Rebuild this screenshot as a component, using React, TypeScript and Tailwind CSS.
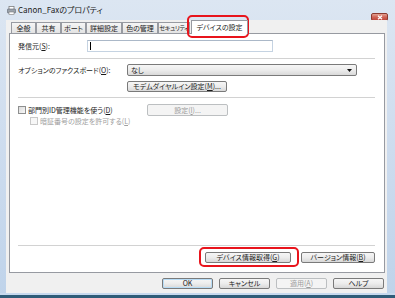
import { ReactNode } from "react";

const jp =
  "font-['Noto_Sans_CJK_JP','Noto_Sans',sans-serif] [font-feature-settings:'palt']";

function Key({ k }: { k: string }) {
  return (
    <>
      (<span className="underline underline-offset-1">{k}</span>)
    </>
  );
}

function WinButton({
  children,
  className = "",
  disabled = false,
  primary = false,
}: {
  children: ReactNode;
  className?: string;
  disabled?: boolean;
  primary?: boolean;
}) {
  return (
    <div
      className={[
        "flex h-[11px] items-center justify-center whitespace-nowrap rounded-[2px] border text-[7px] leading-none",
        disabled
          ? "border-[#bcbfc1] bg-[#f4f4f4] text-[#9c9c9c]"
          : "border-[#7a7a7a] bg-gradient-to-b from-[#f6f6f6] via-[#ececec] to-[#d8d8d8] text-[#1b1b1b]",
        primary ? "border-[#3d7bad] shadow-[inset_0_0_0_1px_#b7dcf6]" : "",
        className,
      ].join(" ")}
    >
      {children}
    </div>
  );
}

function CheckBox({ disabled = false }: { disabled?: boolean }) {
  return (
    <div
      className={[
        "h-[8px] w-[8px] border",
        disabled
          ? "border-[#c9c9c9] bg-[#f7f7f7]"
          : "border-[#8e8f8f] bg-gradient-to-br from-[#dcdcdc] to-[#f8f8f8]",
      ].join(" ")}
    />
  );
}

const tabs = [
  { label: "全般", width: "w-[25px] justify-center text-[7px]" },
  { label: "共有", width: "w-[25px] justify-center text-[7px]" },
  { label: "ポート", width: "w-[25px] justify-center text-[7px]" },
  { label: "詳細設定", width: "w-[36px] justify-center text-[7px]" },
  { label: "色の管理", width: "w-[36px] justify-center text-[7px]" },
  { label: "セキュリティ", width: "w-[32px] justify-center text-[6px] tracking-[-0.3px]" },
];

export default function App() {
  return (
    <div
      className={`${jp} relative flex h-[298px] w-[395px] flex-col overflow-hidden bg-gradient-to-b from-[#dce6f2] via-[#cddcee] to-[#bfd3ea] text-[#1b1b1b]`}
    >
      {/* title bar */}
      <div className="flex h-[20px] shrink-0 items-start">
        <svg
          className="ml-[7px] mt-[6px]"
          width="9"
          height="9"
          viewBox="0 0 9 9"
        >
          <rect x="2" y="0.5" width="5" height="3" fill="#fff" stroke="#7d7d7d" strokeWidth="0.8" />
          <rect x="0.5" y="3" width="8" height="4" rx="0.6" fill="#9aa2ab" stroke="#5f6670" strokeWidth="0.6" />
          <rect x="2" y="6" width="5" height="2.5" fill="#fff" stroke="#7d7d7d" strokeWidth="0.6" />
        </svg>
        <span className="ml-[2px] mt-[5px] text-[8px] leading-[10px] text-[#222]">
          Canon_Faxのプロパティ
        </span>
        <div className="ml-auto mr-[7px] mt-[13px] flex h-[8px] w-[17px] items-center justify-center rounded-[2px] border border-[#8b3a30] bg-gradient-to-b from-[#e3a193] via-[#cf6457] to-[#c0463b]">
          <svg width="6" height="5" viewBox="0 0 6 5">
            <path d="M1 0.7 L5 4.3 M5 0.7 L1 4.3" stroke="#fff" strokeWidth="1.2" />
          </svg>
        </div>
      </div>

      {/* dialog body */}
      <div className="ml-[6px] mr-[8px] flex flex-1 flex-col bg-[#f0f0f0] pl-[3px] pr-[2px]">
        {/* tab strip */}
        <div className="flex h-[13px] items-end pl-[2px]">
          {tabs.map((t) => (
            <div
              key={t.label}
              className={`${t.width} flex h-[11px] items-center overflow-hidden whitespace-nowrap border border-b-0 border-[#979aa1] bg-gradient-to-b from-[#f5f5f5] to-[#e3e3e3] leading-none`}
            >
              {t.label}
            </div>
          ))}
          <div className="relative z-10 -mb-px ml-[1px] flex h-[14px] w-[57px] items-center justify-center whitespace-nowrap border border-b-0 border-[#979aa1] bg-white text-[7px] leading-none">
            デバイスの設定
          </div>
        </div>

        {/* tab panel */}
        <div className="flex h-[240px] flex-col border border-[#979aa1] bg-white pb-[9px] pl-[8px] pr-[9px] pt-[6px] text-[7px] leading-none">
          <div className="flex h-[12px] items-center">
            <span className="w-[69px]">
              発信元<Key k="S" />:
            </span>
            <div className="flex h-[12px] w-[186px] items-center border border-[#c5d3e2] border-t-[#abb8c8] bg-white pl-[2px]">
              <div className="h-[8px] w-px bg-black" />
            </div>
          </div>

          <div className="mt-[6px] h-px bg-[#d2d2d2]" />

          <div className="mt-[5px] flex h-[12px] items-center">
            <span className="w-[109px] whitespace-nowrap">
              オプションのファクスボード<Key k="O" />:
            </span>
            <div className="flex h-[12px] w-[230px] items-center rounded-[2px] border border-[#7a7a7a] bg-gradient-to-b from-[#f6f6f6] via-[#ececec] to-[#d9d9d9] pl-[3px] pr-[4px]">
              <span>なし</span>
              <svg className="ml-auto" width="5" height="3" viewBox="0 0 5 3">
                <path d="M0 0 H5 L2.5 3 Z" fill="#111" />
              </svg>
            </div>
          </div>

          <div className="mt-[5px] flex">
            <div className="w-[109px]" />
            <WinButton className="w-[100px]">
              モデムダイヤルイン設定<Key k="M" />...
            </WinButton>
          </div>

          <div className="mt-[5px] h-px bg-[#d2d2d2]" />

          <div className="mt-[6px] flex h-[12px] items-center">
            <CheckBox />
            <span className="ml-[2px] w-[119px] whitespace-nowrap">
              部門別ID管理機能を使う<Key k="D" />
            </span>
            <WinButton disabled className="h-[12px] w-[81px]">
              設定<Key k="I" />...
            </WinButton>
          </div>

          <div className="mt-[1px] flex items-center pl-[12px] text-[#a0a0a0]">
            <CheckBox disabled />
            <span className="ml-[2px] whitespace-nowrap">
              暗証番号の設定を許可する<Key k="L" />
            </span>
          </div>

          <div className="mt-auto h-px bg-[#d2d2d2]" />

          <div className="mt-[6px] flex justify-end gap-[10px]">
            <WinButton className="w-[86px]">
              デバイス情報取得<Key k="G" />
            </WinButton>
            <WinButton className="w-[74px]">
              バージョン情報<Key k="B" />
            </WinButton>
          </div>
        </div>

        {/* dialog buttons */}
        <div className="mt-[5px] flex justify-end gap-[6px] pr-px">
          <WinButton primary className="w-[51px]">
            OK
          </WinButton>
          <WinButton className="w-[51px]">キャンセル</WinButton>
          <WinButton disabled className="w-[51px]">
            適用<Key k="A" />
          </WinButton>
          <WinButton className="w-[51px]">ヘルプ</WinButton>
        </div>
      </div>

      {/* bottom frame */}
      <div className="h-[2px] shrink-0 bg-[#c7d9ee]" />
      <div className="h-[3px] shrink-0 bg-[#2f5c78]" />

      {/* red callouts */}
      <div className="absolute left-[187px] top-[15px] h-[23px] w-[62px] rounded-[5px] border-2 border-[#e8141c]" />
      <div className="absolute left-[199px] top-[247px] h-[20px] w-[100px] rounded-[5px] border-2 border-[#e8141c]" />
    </div>
  );
}
